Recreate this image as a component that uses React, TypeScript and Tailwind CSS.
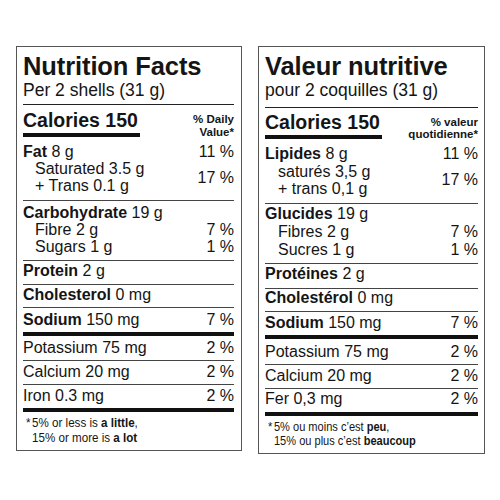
import React from "react";

type Txt = {
  title: string;
  serving: string;
  dv: [string, string];
  fat: [string, string];
  sat: string;
  trans: string;
  carb: [string, string];
  fibre: string;
  sugars: string;
  protein: [string, string];
  chol: [string, string];
  sodium: [string, string];
  potassium: string;
  calcium: string;
  iron: string;
  foot1: [string, string, string];
  foot2: [string, string];
};

type Sp = {
  box: string;
  head: string;
  cal: string;
  dvBox: string;
  fat: string;
  carb: string;
  protein: string;
  chol: string;
  sodium: string;
  potassium: string;
  calcium: string;
  iron: string;
  foot: string;
  sub: string;
  footText: string;
};

const en: Txt = {
  title: "Nutrition Facts",
  serving: "Per 2 shells (31 g)",
  dv: ["% Daily", "Value*"],
  fat: ["Fat", "8 g"],
  sat: "Saturated 3.5 g",
  trans: "+ Trans 0.1 g",
  carb: ["Carbohydrate", "19 g"],
  fibre: "Fibre 2 g",
  sugars: "Sugars 1 g",
  protein: ["Protein", "2 g"],
  chol: ["Cholesterol", "0 mg"],
  sodium: ["Sodium", "150 mg"],
  potassium: "Potassium 75 mg",
  calcium: "Calcium 20 mg",
  iron: "Iron 0.3 mg",
  foot1: ["5% or less is ", "a little", ","],
  foot2: ["15% or more is ", "a lot"],
};

const fr: Txt = {
  title: "Valeur nutritive",
  serving: "pour 2 coquilles (31 g)",
  dv: ["% valeur", "quotidienne*"],
  fat: ["Lipides", "8 g"],
  sat: "saturés 3,5 g",
  trans: "+ trans 0,1 g",
  carb: ["Glucides", "19 g"],
  fibre: "Fibres 2 g",
  sugars: "Sucres 1 g",
  protein: ["Protéines", "2 g"],
  chol: ["Cholestérol", "0 mg"],
  sodium: ["Sodium", "150 mg"],
  potassium: "Potassium 75 mg",
  calcium: "Calcium 20 mg",
  iron: "Fer 0,3 mg",
  foot1: ["5% ou moins c’est ", "peu", ","],
  foot2: ["15% ou plus c’est ", "beaucoup"],
};

const enSp: Sp = {
  box: "w-[226px] pl-[6px] pr-[7px] pt-[5px]",
  head: "pb-[4px]",
  cal: "pt-[4px]",
  dvBox: "pt-[4px] leading-[13px]",
  fat: "pt-[4px] pb-[6px] leading-[17px]",
  carb: "pt-[3px] pb-[5px] leading-[17px]",
  protein: "pt-[1px] pb-[5px]",
  chol: "pt-[1px] pb-[4px]",
  sodium: "pt-[3px] pb-[4px]",
  potassium: "pt-[3px] pb-[4px]",
  calcium: "pt-[2px] pb-[4px]",
  iron: "pt-[2px] pb-[4px]",
  foot: "pt-[3px] pb-[5px]",
  sub: "pl-3",
  footText: "text-[13.5px] leading-[15px] scale-x-[0.86]",
};

const frSp: Sp = {
  box: "w-[227px] px-[6px] pt-[5px]",
  head: "pb-[7px]",
  cal: "pt-[3px]",
  dvBox: "pt-[5px] leading-[12px]",
  fat: "pt-[5px] pb-[5px] leading-[17.5px]",
  carb: "pt-[1px] pb-[4px] leading-[18px]",
  protein: "pt-[1px] pb-[6px]",
  chol: "pt-0 pb-[5px]",
  sodium: "pt-[2px] pb-[4px]",
  potassium: "pt-[4px] pb-[4px]",
  calcium: "pt-[2px] pb-[4px]",
  iron: "pt-[1px] pb-[5px]",
  foot: "pt-[4px] pb-[5px]",
  sub: "pl-[13px]",
  footText: "text-[13px] leading-[14px] scale-x-[0.85]",
};

const Bold: React.FC<{ b: string; r: string }> = ({ b, r }) => (
  <span>
    <span className="font-bold">{b}</span> {r}
  </span>
);

const Line: React.FC<{ cls: string; left: React.ReactNode; right?: string }> = ({ cls, left, right }) => (
  <div className={`flex justify-between border-b border-[#444] leading-[17px] ${cls}`}>
    {left}
    {right && <span>{right}</span>}
  </div>
);

const Panel: React.FC<{ t: Txt; s: Sp }> = ({ t, s }) => (
  <div className={`flex flex-col border border-[#555] bg-white text-[#151515] ${s.box}`}>
    <div className={`border-b border-[#222] ${s.head}`}>
      <div className="text-[25.5px] font-bold leading-[28px] tracking-[-0.1px]">{t.title}</div>
      <div className="text-[17.5px] leading-[20px]">{t.serving}</div>
    </div>

    <div className={`flex items-start justify-between ${s.cal}`}>
      <div className="flex flex-col">
        <div className="text-[19.5px] font-bold leading-[22px]">Calories 150</div>
        <div className="mt-[2px] h-[4px] w-[117px] bg-[#111]" />
      </div>
      <div className={`text-right text-[11.5px] font-bold ${s.dvBox}`}>
        <div>{t.dv[0]}</div>
        <div>{t.dv[1]}</div>
      </div>
    </div>

    <div className={`border-b border-[#444] text-[16px] ${s.fat}`}>
      <div className="flex justify-between">
        <Bold b={t.fat[0]} r={t.fat[1]} />
        <span>11 %</span>
      </div>
      <div className="flex items-center justify-between">
        <div className={s.sub}>
          <div>{t.sat}</div>
          <div>{t.trans}</div>
        </div>
        <span>17 %</span>
      </div>
    </div>

    <div className={`border-b border-[#444] text-[16px] ${s.carb}`}>
      <Bold b={t.carb[0]} r={t.carb[1]} />
      <div className={`flex justify-between ${s.sub}`}>
        <span>{t.fibre}</span>
        <span>7 %</span>
      </div>
      <div className={`flex justify-between ${s.sub}`}>
        <span>{t.sugars}</span>
        <span>1 %</span>
      </div>
    </div>

    <div className="text-[16px]">
      <Line cls={s.protein} left={<Bold b={t.protein[0]} r={t.protein[1]} />} />
      <Line cls={s.chol} left={<Bold b={t.chol[0]} r={t.chol[1]} />} />
      <div className={`flex justify-between leading-[17px] ${s.sodium}`}>
        <Bold b={t.sodium[0]} r={t.sodium[1]} />
        <span>7 %</span>
      </div>
      <div className="h-[4px] bg-[#111]" />
      <Line cls={s.potassium} left={<span>{t.potassium}</span>} right="2 %" />
      <Line cls={s.calcium} left={<span>{t.calcium}</span>} right="2 %" />
      <div className={`flex justify-between leading-[17px] ${s.iron}`}>
        <span>{t.iron}</span>
        <span>2 %</span>
      </div>
      <div className="h-[4px] bg-[#111]" />
    </div>

    <div className={`pl-[3px] ${s.foot}`}>
      <div className={`flex origin-left whitespace-nowrap ${s.footText}`}>
        <span className="w-[7px]">*</span>
        <div>
          <div>
            {t.foot1[0]}
            <span className="font-bold">{t.foot1[1]}</span>
            {t.foot1[2]}
          </div>
          <div>
            {t.foot2[0]}
            <span className="font-bold">{t.foot2[1]}</span>
          </div>
        </div>
      </div>
    </div>
  </div>
);

export default function App() {
  return (
    <div className="h-[500px] w-[500px] bg-white font-['Liberation_Sans',Arial,sans-serif]">
      <div className="flex items-start gap-4 pl-4 pt-[46px]">
        <Panel t={en} s={enSp} />
        <Panel t={fr} s={frSp} />
      </div>
    </div>
  );
}
